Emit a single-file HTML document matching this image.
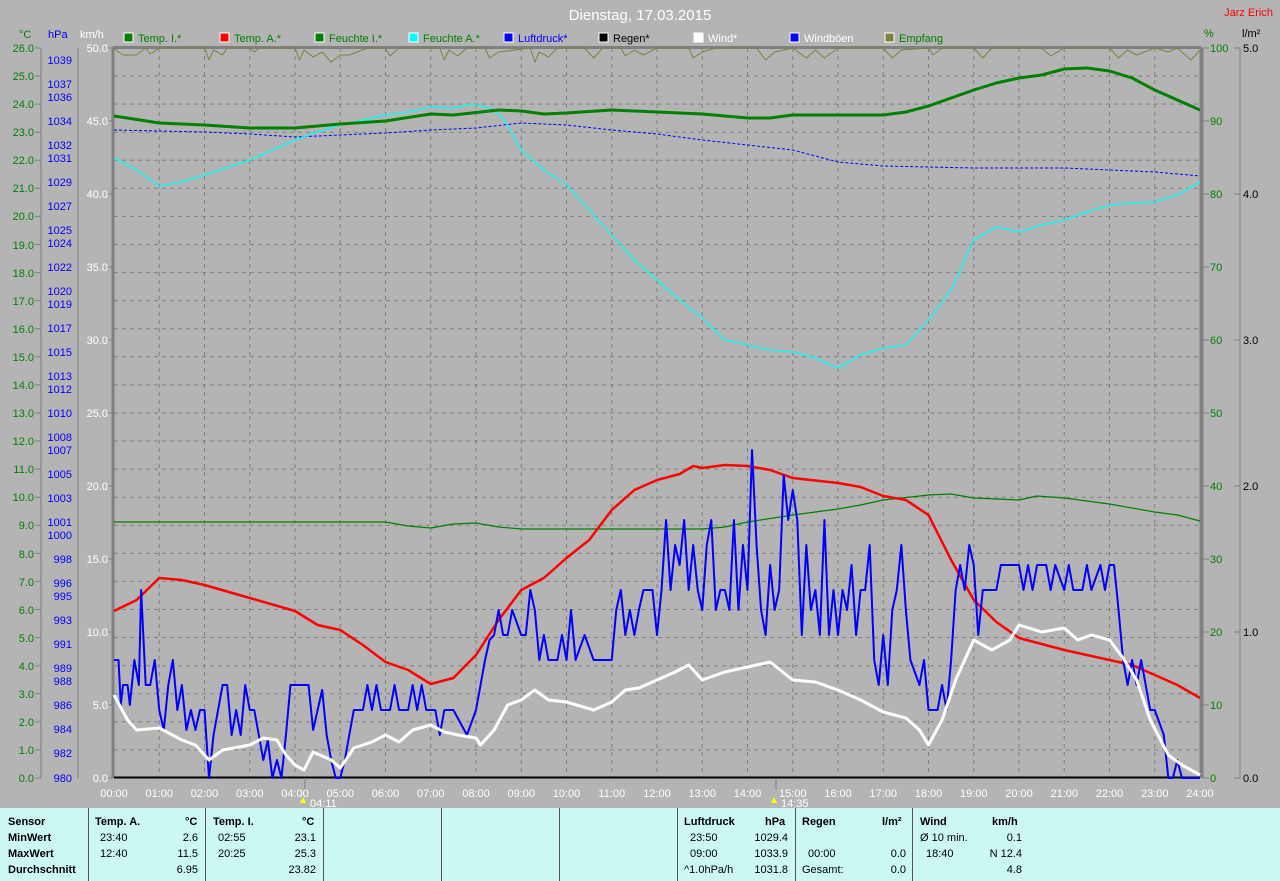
<!DOCTYPE html>
<html><head><meta charset="utf-8"><style>
body{margin:0;width:1280px;height:881px;overflow:hidden;background:#b4b4b4;font-family:"Liberation Sans",sans-serif}
svg{position:absolute;left:0;top:0}
.tb{position:absolute;left:0;top:808px;width:1280px;height:73px;background:#ccf8f4;font-size:11px;color:#000}
.tb .c{position:absolute;top:0;height:73px;border-left:1px solid #555}
.tb span{position:absolute;white-space:nowrap}
.b{font-weight:bold}
</style></head><body>
<svg width="1280" height="808" font-family="Liberation Sans, sans-serif" font-size="11">
<text x="640" y="20" fill="#fff" font-size="15" text-anchor="middle">Dienstag, 17.03.2015</text>
<text x="1273" y="16" fill="#f00" font-size="11" text-anchor="end">Jarz Erich</text>
<g font-size="11">
<rect x="124" y="33" width="9" height="9" fill="#008000" stroke="#fff"/><text x="138" y="42" fill="#008000">Temp. I.*</text>
<rect x="220" y="33" width="9" height="9" fill="#f00" stroke="#fff"/><text x="234" y="42" fill="#008000">Temp. A.*</text>
<rect x="315" y="33" width="9" height="9" fill="#008000" stroke="#fff"/><text x="329" y="42" fill="#008000">Feuchte I.*</text>
<rect x="409" y="33" width="9" height="9" fill="#0ff" stroke="#fff"/><text x="423" y="42" fill="#008000">Feuchte A.*</text>
<rect x="504" y="33" width="9" height="9" fill="#00f" stroke="#fff"/><text x="518" y="42" fill="#0000ff">Luftdruck*</text>
<rect x="599" y="33" width="9" height="9" fill="#000" stroke="#fff"/><text x="613" y="42" fill="#000">Regen*</text>
<rect x="694" y="33" width="9" height="9" fill="#fff" stroke="#fff"/><text x="708" y="42" fill="#fff">Wind*</text>
<rect x="790" y="33" width="9" height="9" fill="#00f" stroke="#fff"/><text x="804" y="42" fill="#fff">Windböen</text>
<rect x="885" y="33" width="9" height="9" fill="#808040" stroke="#fff"/><text x="899" y="42" fill="#008000">Empfang</text>
</g>
<text x="19" y="38" fill="#008000">°C</text><text x="48" y="38" fill="#00f">hPa</text><text x="80" y="38" fill="#fff">km/h</text>
<text x="1204" y="37" fill="#008000">%</text><text x="1242" y="37" fill="#000">l/m²</text>
<!-- grid -->
<path stroke="#808080" stroke-dasharray="4 4" fill="none" d="M159.25 48V778M204.5 48V778M249.75 48V778M295 48V778M340.25 48V778M385.5 48V778M430.75 48V778M476 48V778M521.25 48V778M566.5 48V778M611.75 48V778M657 48V778M702.25 48V778M747.5 48V778M792.75 48V778M838 48V778M883.25 48V778M928.5 48V778M973.75 48V778M1019 48V778M1064.25 48V778M1109.5 48V778M1154.75 48V778
M114 749.9H1200M114 721.8H1200M114 693.8H1200M114 665.7H1200M114 637.6H1200M114 609.5H1200M114 581.4H1200M114 553.4H1200M114 525.3H1200M114 497.2H1200M114 469.1H1200M114 441H1200M114 413H1200M114 384.9H1200M114 356.8H1200M114 328.7H1200M114 300.6H1200M114 272.6H1200M114 244.5H1200M114 216.4H1200M114 188.3H1200M114 160.2H1200M114 132.2H1200M114 104.1H1200M114 76H1200"/>
<!-- axes -->
<path stroke="#808080" fill="none" d="M41 48V778M78 48V778M1240 48V778M1203 48V778"/>
<path stroke="#808080" stroke-width="3" fill="none" d="M113 47V778M1201 47V778M113 47.5H1201"/>
<path stroke="#000" stroke-width="2" d="M114 777.5H1200"/>
<path stroke="#808080" d="M305 778V790M776 778V790"/>
<path stroke="#808080" d="M35 778H41M35 749.9H41M35 721.8H41M35 693.8H41M35 665.7H41M35 637.6H41M35 609.5H41M35 581.4H41M35 553.4H41M35 525.3H41M35 497.2H41M35 469.1H41M35 441H41M35 413H41M35 384.9H41M35 356.8H41M35 328.7H41M35 300.6H41M35 272.6H41M35 244.5H41M35 216.4H41M35 188.3H41M35 160.2H41M35 132.2H41M35 104.1H41M35 76H41M35 48H41
M107 48H113M107 121H113M107 194H113M107 267H113M107 340H113M107 413H113M107 486H113M107 559H113M107 632H113M107 705H113M107 778H113
M1203 48H1209M1203 121H1209M1203 194H1209M1203 267H1209M1203 340H1209M1203 413H1209M1203 486H1209M1203 559H1209M1203 632H1209M1203 705H1209M1203 778H1209
M1234 48H1240M1234 194H1240M1234 340H1240M1234 486H1240M1234 632H1240M1234 778H1240"/>
<g fill="#008000" text-anchor="end">
<text x="34" y="782">0.0</text><text x="34" y="754">1.0</text><text x="34" y="726">2.0</text><text x="34" y="698">3.0</text><text x="34" y="670">4.0</text><text x="34" y="642">5.0</text><text x="34" y="614">6.0</text><text x="34" y="586">7.0</text><text x="34" y="558">8.0</text><text x="34" y="529">9.0</text><text x="34" y="501">10.0</text><text x="34" y="473">11.0</text><text x="34" y="445">12.0</text><text x="34" y="417">13.0</text><text x="34" y="389">14.0</text><text x="34" y="361">15.0</text><text x="34" y="333">16.0</text><text x="34" y="305">17.0</text><text x="34" y="277">18.0</text><text x="34" y="249">19.0</text><text x="34" y="220">20.0</text><text x="34" y="192">21.0</text><text x="34" y="164">22.0</text><text x="34" y="136">23.0</text><text x="34" y="108">24.0</text><text x="34" y="80">25.0</text><text x="34" y="52">26.0</text>
</g>
<g fill="#00f" text-anchor="end">
<text x="72" y="782">980</text><text x="72" y="757">982</text><text x="72" y="733">984</text><text x="72" y="709">986</text><text x="72" y="685">988</text><text x="72" y="672">989</text><text x="72" y="648">991</text><text x="72" y="624">993</text><text x="72" y="600">995</text><text x="72" y="587">996</text><text x="72" y="563">998</text><text x="72" y="539">1000</text><text x="72" y="526">1001</text><text x="72" y="502">1003</text><text x="72" y="478">1005</text><text x="72" y="454">1007</text><text x="72" y="441">1008</text><text x="72" y="417">1010</text><text x="72" y="393">1012</text><text x="72" y="380">1013</text><text x="72" y="356">1015</text><text x="72" y="332">1017</text><text x="72" y="308">1019</text><text x="72" y="295">1020</text><text x="72" y="271">1022</text><text x="72" y="247">1024</text><text x="72" y="234">1025</text><text x="72" y="210">1027</text><text x="72" y="186">1029</text><text x="72" y="162">1031</text><text x="72" y="149">1032</text><text x="72" y="125">1034</text><text x="72" y="101">1036</text><text x="72" y="88">1037</text><text x="72" y="64">1039</text>
</g>
<g fill="#fff" text-anchor="end">
<text x="108" y="782">0.0</text><text x="108" y="709">5.0</text><text x="108" y="636">10.0</text><text x="108" y="563">15.0</text><text x="108" y="490">20.0</text><text x="108" y="417">25.0</text><text x="108" y="344">30.0</text><text x="108" y="271">35.0</text><text x="108" y="198">40.0</text><text x="108" y="125">45.0</text><text x="108" y="52">50.0</text>
</g>
<g fill="#008000">
<text x="1210" y="782">0</text><text x="1210" y="709">10</text><text x="1210" y="636">20</text><text x="1210" y="563">30</text><text x="1210" y="490">40</text><text x="1210" y="417">50</text><text x="1210" y="344">60</text><text x="1210" y="271">70</text><text x="1210" y="198">80</text><text x="1210" y="125">90</text><text x="1210" y="52">100</text>
</g>
<g fill="#000">
<text x="1243" y="782">0.0</text><text x="1243" y="636">1.0</text><text x="1243" y="490">2.0</text><text x="1243" y="344">3.0</text><text x="1243" y="198">4.0</text><text x="1243" y="52">5.0</text>
</g>
<g fill="#fff" text-anchor="middle">
<text x="114" y="797">00:00</text><text x="159.25" y="797">01:00</text><text x="204.5" y="797">02:00</text><text x="249.75" y="797">03:00</text><text x="295" y="797">04:00</text><text x="340.25" y="797">05:00</text><text x="385.5" y="797">06:00</text><text x="430.75" y="797">07:00</text><text x="476" y="797">08:00</text><text x="521.25" y="797">09:00</text><text x="566.5" y="797">10:00</text><text x="611.75" y="797">11:00</text><text x="657" y="797">12:00</text><text x="702.25" y="797">13:00</text><text x="747.5" y="797">14:00</text><text x="792.75" y="797">15:00</text><text x="838" y="797">16:00</text><text x="883.25" y="797">17:00</text><text x="928.5" y="797">18:00</text><text x="973.75" y="797">19:00</text><text x="1019" y="797">20:00</text><text x="1064.25" y="797">21:00</text><text x="1109.5" y="797">22:00</text><text x="1154.75" y="797">23:00</text><text x="1200" y="797">24:00</text>
</g>
<text x="310" y="807" fill="#fff">04:11</text><text x="781" y="807" fill="#fff">14:35</text>
<path d="M303 797l3 6h-6z" fill="#ff0"/><path d="M774 797l3 6h-6z" fill="#ff0"/>
<g transform="translate(114,0) scale(45.25,1)" fill="none" stroke-linejoin="round">
<polyline vector-effect="non-scaling-stroke" stroke="#808040" stroke-width="1" points="0,48 .1,52 .2,55 .5,55 .7,48 .8,54 1,48 2,48 2.1,60 2.2,50 2.4,55 2.5,48 3,48 3.1,52 3.2,48 4,48 4.1,60 4.2,50 4.4,57 4.6,52 4.8,62 5,55 5.2,55 5.6,48 6,48 6.1,56 6.3,48 7.2,48 7.3,60 7.4,50 7.6,56 7.8,48 8.2,48 8.3,58 8.5,52 9.2,48 9.3,62 9.4,52 9.6,57 9.8,48 10.4,48 10.6,58 10.8,48 11.2,48 11.3,56 11.5,50 11.7,55 12,48 12.7,48 12.8,58 13,52 13.3,48 14.2,48 14.4,60 14.6,52 15,48 15.3,58 15.5,50 15.7,58 16,48 17,48 17.2,58 17.4,50 18,48 18.1,55 18.3,48 19,48 19.2,58 19.4,48 20.5,48 20.7,56 21,48 22,48 22.2,58 22.4,50 22.6,55 23,48 23.3,52 23.5,48 23.8,60 24,50"/>
<polyline vector-effect="non-scaling-stroke" stroke="#0000ff" stroke-width="1" stroke-dasharray="3 2" points="0,130 1,131 2,132 3,134 4,137 5,135 6,133 7,130 8,128 9,123 10,125 11,130 12,134 13,140 14,145 15,150 16,162 17,166 18,167 19,168 20,168 21,168 22,170 23,172 24,176"/>
<polyline vector-effect="non-scaling-stroke" stroke="#00ffff" stroke-width="1.3" points="0,158 .5,170 1,186 1.5,182 2,175 3,160 3.5,150 4,140 4.5,132 5,125 6,115 6.5,112 7,107 7.5,108 7.9,104 8.3,108 8.6,118 9,150 9.5,170 10,185 10.5,210 11,235 11.5,260 12,280 12.5,300 13,318 13.5,340 14,345 14.5,350 15,352 15.5,358 16,368 16.5,355 17,348 17.5,345 18,320 18.5,290 19,240 19.5,227 20,232 20.5,225 21,220 21.5,212 22,205 22.5,203 23,202 23.5,195 24,182"/>
<polyline vector-effect="non-scaling-stroke" stroke="#008000" stroke-width="1.2" points="0,522 6,522 6.5,526 7,528 7.5,524 8,523 8.5,527 9,529 13,529 13.5,527 14,522 15,515 16,509 16.5,505 17,500 18,495 18.5,494 19,498 20,500 20.4,496 21,498 22,504 23,512 23.5,515 24,521"/>
<polyline vector-effect="non-scaling-stroke" stroke="#008000" stroke-width="3" points="0,116 1,123 2,125 3,128 4,128 5,124 6,121 7,114 7.5,115 8.5,110 9,111 9.5,114 10,113 11,110 12,112 13,114 14,118 14.5,118 15,115 16,115 17,115 17.5,112 18,106 18.5,98 19,90 19.5,83 20,78 20.5,75 21,69 21.5,68 22,71 22.5,78 23,90 23.5,100 24,110"/>
<polyline vector-effect="non-scaling-stroke" stroke="#ff0000" stroke-width="2.5" points="0,611 .5,600 1,578 1.5,580 2,585 3,598 4,611 4.5,625 5,630 5.5,645 6,662 6.5,670 7,684 7.5,678 8,655 8.5,620 9,590 9.5,578 10,558 10.5,540 11,510 11.5,490 12,480 12.5,474 12.8,466 13,468 13.5,465 14,466 14.5,470 15,478 16,483 16.5,487 17,496 17.5,500 18,515 18.5,560 19,600 19.5,622 20,638 21,650 21.5,655 22,660 22.5,665 23,675 23.5,685 24,698"/>
<polyline vector-effect="non-scaling-stroke" stroke="#0000ff" stroke-width="2" points="0,660 .1,660 .15,705 .2,685 .3,685 .35,705 .45,660 .55,685 .6,590 .7,685 .8,685 .9,660 1,710 1.1,730 1.2,685 1.3,660 1.4,710 1.5,685 1.6,730 1.7,710 1.8,730 1.9,710 2,710 2.1,778 2.2,735 2.3,710 2.4,685 2.5,685 2.6,735 2.7,710 2.8,735 2.9,685 3,710 3.1,710 3.2,735 3.3,760 3.4,740 3.5,778 3.6,760 3.7,778 3.8,735 3.9,685 4,685 4.3,685 4.4,730 4.5,710 4.6,690 4.7,735 4.8,760 4.9,778 5,778 5.1,760 5.2,735 5.3,710 5.5,710 5.6,685 5.7,710 5.8,685 5.9,710 6.1,710 6.2,685 6.3,710 6.5,710 6.6,685 6.7,710 6.8,685 6.9,710 7.1,710 7.2,735 7.3,710 7.5,710 7.8,735 8,710 8.1,685 8.2,660 8.3,640 8.4,635 8.5,610 8.6,635 8.7,635 8.8,610 9,635 9.1,635 9.2,590 9.3,610 9.4,660 9.5,635 9.6,660 9.8,660 9.9,635 10,660 10.1,610 10.2,660 10.4,635 10.6,660 11,660 11.1,610 11.2,590 11.3,635 11.4,610 11.5,635 11.6,610 11.7,590 11.9,590 12,635 12.1,590 12.2,520 12.3,590 12.4,545 12.5,565 12.6,520 12.7,590 12.8,545 12.9,590 13,610 13.1,545 13.2,520 13.3,610 13.4,590 13.5,590 13.6,610 13.7,520 13.8,610 13.9,545 14,590 14.1,450 14.2,545 14.3,610 14.4,635 14.5,565 14.6,610 14.7,590 14.8,475 14.9,520 15,490 15.1,520 15.2,635 15.3,545 15.4,610 15.5,590 15.6,635 15.7,520 15.8,635 15.9,590 16,635 16.1,590 16.2,610 16.3,565 16.4,635 16.5,590 16.6,590 16.7,545 16.8,660 16.9,685 17,635 17.1,685 17.2,610 17.3,590 17.4,545 17.5,610 17.6,660 17.8,685 17.9,660 18,710 18.2,710 18.3,685 18.4,710 18.5,660 18.6,590 18.7,565 18.8,590 18.9,545 19,565 19.1,635 19.2,590 19.5,590 19.6,565 20,565 20.1,590 20.2,565 20.3,590 20.4,565 20.6,565 20.7,590 20.8,565 21,590 21.1,565 21.2,590 21.4,590 21.5,565 21.6,590 21.8,565 21.9,590 22,565 22.1,565 22.2,610 22.3,660 22.4,685 22.5,660 22.6,685 22.7,660 22.8,685 22.9,710 23,710 23.2,735 23.3,778 23.4,778 23.5,760 23.6,778 24,778"/>
<polyline vector-effect="non-scaling-stroke" stroke="#ffffff" stroke-width="3" points="0,695 .3,720 .5,730 1,728 1.5,740 1.8,745 2.1,760 2.4,750 3,745 3.3,738 3.6,740 3.8,755 4,765 4.2,770 4.4,752 4.8,760 5,768 5.3,748 5.7,742 6,735 6.3,742 6.6,730 7,725 7.3,732 7.6,735 8,738 8.1,745 8.4,730 8.7,705 9,700 9.3,690 9.6,700 10,702 10.6,710 11,702 11.3,690 11.6,688 12,680 12.4,672 12.7,665 13,680 13.5,672 14,667 14.5,662 15,680 15.5,682 16,690 16.5,700 17,712 17.5,718 17.8,730 18,745 18.3,720 18.6,680 19,640 19.4,650 19.8,640 20,625 20.5,632 21,628 21.3,640 21.6,635 22,640 22.3,658 22.6,680 22.9,720 23.3,755 23.6,765 24,775"/>
</g>
</svg>
<div class="tb">
<div class="c" style="left:88px"></div><div class="c" style="left:205px"></div><div class="c" style="left:323px"></div><div class="c" style="left:441px"></div><div class="c" style="left:559px"></div><div class="c" style="left:677px"></div><div class="c" style="left:795px"></div><div class="c" style="left:912px"></div>
<span class="b" style="left:8px;top:8px">Sensor</span><span class="b" style="left:8px;top:24px">MinWert</span><span class="b" style="left:8px;top:40px">MaxWert</span><span class="b" style="left:8px;top:56px">Durchschnitt</span>
<span class="b" style="left:95px;top:8px">Temp. A.</span><span class="b" style="left:185px;top:8px">°C</span>
<span style="left:100px;top:24px">23:40</span><span style="right:1082px;top:24px">2.6</span>
<span style="left:100px;top:40px">12:40</span><span style="right:1082px;top:40px">11.5</span>
<span style="right:1082px;top:56px">6.95</span>
<span class="b" style="left:213px;top:8px">Temp. I.</span><span class="b" style="left:302px;top:8px">°C</span>
<span style="left:218px;top:24px">02:55</span><span style="right:964px;top:24px">23.1</span>
<span style="left:218px;top:40px">20:25</span><span style="right:964px;top:40px">25.3</span>
<span style="right:964px;top:56px">23.82</span>
<span class="b" style="left:684px;top:8px">Luftdruck</span><span class="b" style="left:765px;top:8px">hPa</span>
<span style="left:690px;top:24px">23:50</span><span style="right:492px;top:24px">1029.4</span>
<span style="left:690px;top:40px">09:00</span><span style="right:492px;top:40px">1033.9</span>
<span style="left:684px;top:56px">^1.0hPa/h</span><span style="right:492px;top:56px">1031.8</span>
<span class="b" style="left:802px;top:8px">Regen</span><span class="b" style="left:882px;top:8px">l/m²</span>
<span style="left:808px;top:40px">00:00</span><span style="right:374px;top:40px">0.0</span>
<span style="left:802px;top:56px">Gesamt:</span><span style="right:374px;top:56px">0.0</span>
<span class="b" style="left:920px;top:8px">Wind</span><span class="b" style="left:992px;top:8px">km/h</span>
<span style="left:920px;top:24px">Ø 10 min.</span><span style="right:258px;top:24px">0.1</span>
<span style="left:926px;top:40px">18:40</span><span style="right:258px;top:40px">N 12.4</span>
<span style="right:258px;top:56px">4.8</span>
</div>
</body></html>
